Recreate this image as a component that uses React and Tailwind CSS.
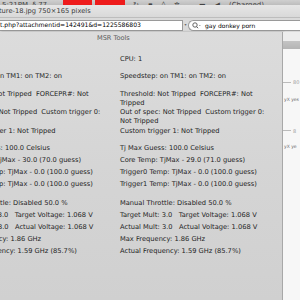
export default function App() {
  return (
    <div className="w-[300px] h-[300px] overflow-hidden flex flex-col bg-[#d4d4d4] text-[#1a1a1a] font-['DejaVu_Sans',Verdana,sans-serif]">
      {/* menu bar */}
      <div className="h-[5px] shrink-0 flex items-end bg-gradient-to-b from-[#cfcfcf] to-[#bdbdbd] text-[7px] leading-[8px] overflow-hidden whitespace-nowrap">
        <div className="w-[63px] pl-[2px] text-[#444] -mb-[4px]">5:21PM &nbsp;§ 77</div>
        <div className="w-[29px] h-[5px] bg-[#ee1c1c]" />
        <div className="w-[3px]" />
        <div className="w-[30px] h-[5px] bg-[#ee1c1c]" />
        <div className="flex-1 flex gap-[9px] pl-[8px] text-[#444] -mb-[4px]">
          <span>↻</span><span>▪</span><span>◊</span><span>✲</span><span className="pl-[10px]">▬</span><span>◀</span><span>(Charged)</span>
        </div>
      </div>
      {/* title bar */}
      <div className="h-[13px] shrink-0 bg-gradient-to-b from-[#e6e6e6] to-[#d9d9d9] border-b border-[#bdbdbd] flex items-center text-[6.7px] text-[#3a3a3a] whitespace-nowrap overflow-hidden">
        <span className="-ml-[1px]">ture-18.jpg 750×165 pixels</span>
      </div>
      {/* toolbar */}
      <div className="h-[14px] shrink-0 bg-[#dadada] flex items-center">
        <div className="w-[183px] h-[11px] bg-white border border-[#9a9a9a] border-l-0 flex items-center text-[6.1px] text-black whitespace-nowrap overflow-hidden">
          t.php?attachmentid=142491&amp;d=1225586803
        </div>
        <div className="w-[5px] text-[4px] text-[#666] text-center">▾</div>
        <div className="flex-1 h-[11px] bg-white border border-[#9a9a9a] border-r-0 rounded-l-full flex items-center pl-[3px] gap-[4px] text-[6px] text-black whitespace-nowrap overflow-hidden">
          <svg width="9" height="7" viewBox="0 0 9 7" className="shrink-0">
            <circle cx="3" cy="3" r="2.2" fill="none" stroke="#555" strokeWidth="0.9" />
            <line x1="4.6" y1="4.6" x2="6" y2="6.2" stroke="#555" strokeWidth="1" />
            <line x1="7" y1="3.5" x2="8.5" y2="3.5" stroke="#777" strokeWidth="0.6" />
          </svg>
          <span>gay donkey porn</span>
        </div>
      </div>
      {/* main */}
      <div className="flex-1 flex min-h-0">
        <div className="w-[283px] shrink-0 bg-gradient-to-b from-[#dcdcdc] via-[#d5d5d5] to-[#d0d0d0] border-r border-[#a8a8a8] shadow-[1px_0_2px_rgba(0,0,0,0.25)] text-[6.7px] leading-[9px] text-[#1e1e1e] overflow-hidden flex flex-col">
          <div className="h-[12px] pl-[97px] pt-[2px] text-[6.6px] text-[#5c5c5c] whitespace-nowrap">MSR Tools</div>
          <div className="pl-[120px] mt-[11px]">CPU: 1</div>
          <div className="grid grid-cols-[164px_164px] -ml-[44px] mt-[8px]">
            {[0, 1].map((c) => (
              <div key={c} className="flex flex-col pr-[12px]">
                <div>Speedstep: on TM1: on TM2: on</div>
                <div className="mt-[9px]">Threshold: Not Tripped &nbsp;FORCEPR#: Not Tripped</div>
                <div>Out of spec: Not Tripped &nbsp;Custom trigger 0: Not Tripped</div>
                <div className="mt-[1px]">Custom trigger 1: Not Tripped</div>
                <div className="mt-[6px] leading-[12px] whitespace-nowrap">
                  <div>Tj Max Guess: 100.0 Celsius</div>
                  <div>Core Temp: TjMax - {c ? '29.0 (71.0' : '30.0 (70.0'} guess)</div>
                  <div>Trigger0 Temp: TjMax - 0.0 (100.0 guess)</div>
                  <div>Trigger1 Temp: TjMax - 0.0 (100.0 guess)</div>
                  <div className="mt-[7px]">Manual Throttle: Disabled 50.0 %</div>
                  <div>Target Mult: 3.0 &nbsp; Target Voltage: 1.068 V</div>
                  <div>Actual Mult: 3.0 &nbsp; Actual Voltage: 1.068 V</div>
                  <div>Max Frequency: 1.86 GHz</div>
                  <div>Actual Frequency: 1.59 GHz (85.7%)</div>
                </div>
              </div>
            ))}
          </div>
        </div>
        <div className="flex-1 bg-[#f7f7f7] flex flex-col text-[5px] text-[#9a9a9a] overflow-hidden whitespace-nowrap">
          <div className="h-[9px] bg-[#ededed]" />
          <div className="h-[8px] bg-gradient-to-b from-[#c4c4c4] to-[#b4b4b4]" />
          <div className="h-[30px]" />
          <div className="flex items-center gap-[2px] leading-[6px]"><span className="w-[8px] border-t border-[#bbb]" /><span>80</span></div>
          <div className="h-[12px]" />
          <div className="text-[#666] text-[4.5px] pl-[1px]">yX yes</div>
          <div className="h-[24px]" />
          <div className="flex items-center gap-[2px] leading-[6px]"><span className="w-[8px] border-t border-[#bbb]" /><span>8</span></div>
          <div className="h-[10px]" />
          <div className="text-[#666] text-[4.5px] pl-[1px]">yX ye</div>
        </div>
      </div>
    </div>
  );
}
